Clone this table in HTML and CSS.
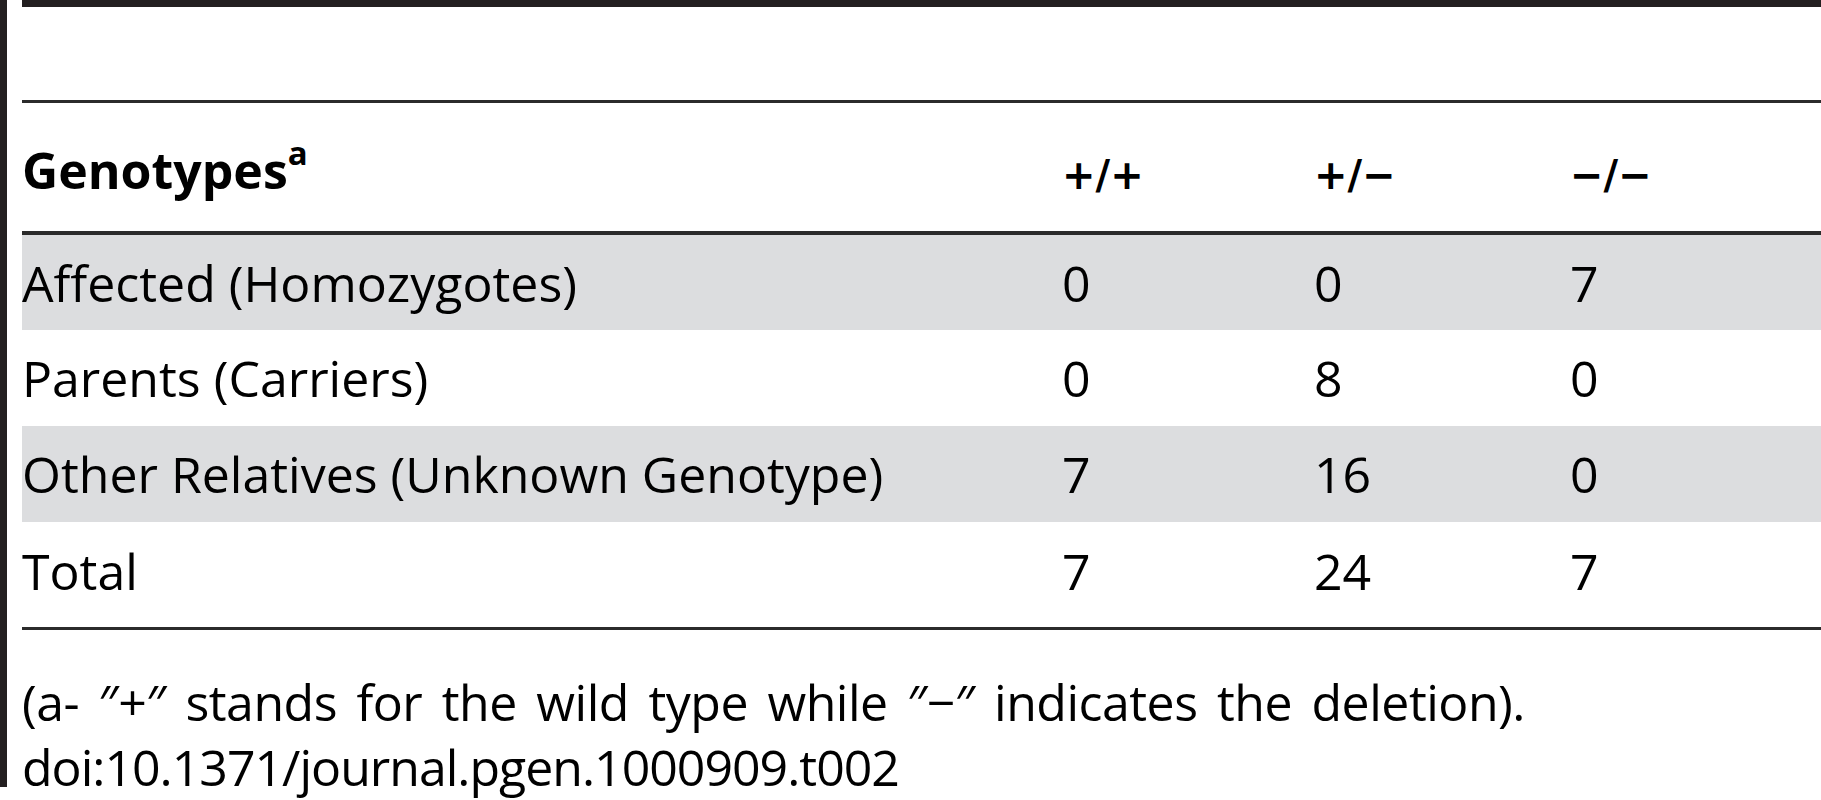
FILE: index.html
```html
<!DOCTYPE html>
<html lang="en">
<head>
<meta charset="utf-8">
<title>Table 2</title>
<link rel="stylesheet" href="styles.css">
</head>
<body>
<div class="page">
  <div class="side-bar"></div>
  <div class="content">
    <div class="top-bar"></div>
    <div class="caption-space"></div>
    <div class="geno" role="table">
      <div class="rule"></div>
      <div class="row head" role="row">
        <div class="cell label" role="columnheader">Genotypes<sup>a</sup></div>
        <div class="cell sym" role="columnheader">+/+</div>
        <div class="cell sym" role="columnheader">+/&minus;</div>
        <div class="cell sym" role="columnheader">&minus;/&minus;</div>
      </div>
      <div class="rule thick"></div>
      <div class="row body shade" role="row">
        <div class="cell label">Affected (Homozygotes)</div><div class="cell">0</div><div class="cell">0</div><div class="cell">7</div>
      </div>
      <div class="row body tall1" role="row">
        <div class="cell label">Parents (Carriers)</div><div class="cell">0</div><div class="cell">8</div><div class="cell">0</div>
      </div>
      <div class="row body shade tall1" role="row">
        <div class="cell label">Other Relatives (Unknown Genotype)</div><div class="cell">7</div><div class="cell">16</div><div class="cell">0</div>
      </div>
      <div class="row body last" role="row">
        <div class="cell label">Total</div><div class="cell">7</div><div class="cell">24</div><div class="cell">7</div>
      </div>
      <div class="rule"></div>
    </div>
    <div class="foot">
      <p class="note">(a- &Prime;+&Prime; stands for the wild type while &Prime;&minus;&Prime; indicates the deletion).</p>
      <p class="doi">doi:10.1371/journal.pgen.1000909.t002</p>
    </div>
  </div>
</div>
</body>
</html>
```
FILE: styles.css
```css
html, body {
  margin: 0;
  padding: 0;
  background: #ffffff;
}
body {
  width: 1821px;
  height: 800px;
  overflow: hidden;
  font-family: "Open Sans", "Noto Sans", sans-serif;
  color: #000000;
}
.page {
  display: flex;
  align-items: flex-start;
}
.side-bar {
  width: 7px;
  height: 787px;
  background: #231f20;
  flex: none;
}
.content {
  margin-left: 15px;
  flex: 1;
  min-width: 0;
}
.top-bar {
  height: 7px;
  background: #231f20;
}
.caption-space {
  height: 93px;
}
.geno {
  display: flex;
  flex-direction: column;
  font-size: 50px;
}
.rule {
  height: 3px;
  background: #2b2b2b;
}
.rule.thick {
  height: 4px;
}
.row {
  display: grid;
  grid-template-columns: 1040px 252px 256px 1fr;
  white-space: nowrap;
}
.cell {
  line-height: 60px;
}
.row.head {
  height: 128px;
  box-sizing: border-box;
  padding-top: 33px;
  align-items: baseline;
  font-weight: 700;
}
.row.head .sym {
  font-family: "DejaVu Sans", sans-serif;
  font-size: 40px;
  font-weight: 700;
}
.row.head sup {
  font-size: 33px;
  line-height: 1;
  vertical-align: 24px;
}
.row.body {
  height: 95px;
  align-items: center;
}
.row.body.tall1 {
  height: 96px;
}
.row.shade {
  background: #dcdddf;
}
.row.last {
  height: 105px;
  box-sizing: border-box;
  padding-bottom: 8px;
}
.foot {
  margin-top: 40px;
  font-size: 50px;
  line-height: 65px;
}
.foot p {
  margin: 0;
  white-space: nowrap;
}
.note {
  letter-spacing: -0.5px;
  word-spacing: 7px;
}
.doi {
  letter-spacing: -1px;
}
```
